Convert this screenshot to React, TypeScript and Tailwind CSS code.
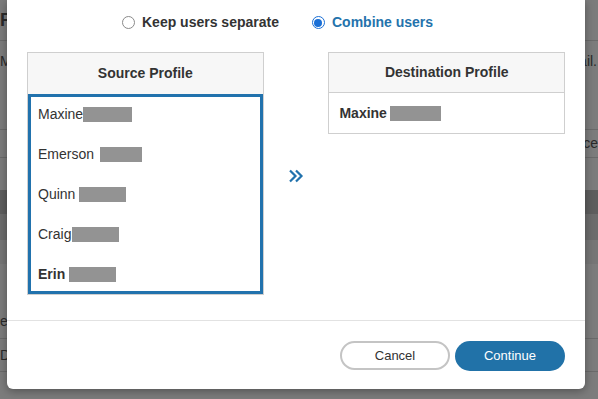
const sourceUsers = [
  { first: "Maxine", gap: 0, w: 49, bold: false },
  { first: "Emerson", gap: 6, w: 42, bold: false },
  { first: "Quinn", gap: 4, w: 47, bold: false },
  { first: "Craig", gap: 1, w: 47, bold: false },
  { first: "Erin", gap: 4, w: 47, bold: true },
];

function Redacted({ w }: { w: number }) {
  return <span className="inline-block h-[15px] bg-[#939393] align-middle" style={{ width: w }} />;
}

function Radio({ checked, label }: { checked: boolean; label: string }) {
  return (
    <label className="flex items-center gap-[7px]">
      {checked ? (
        <span className="flex h-[13px] w-[13px] items-center justify-center rounded-full border border-[#1a6fd6] bg-white">
          <span className="h-[8px] w-[8px] rounded-full bg-[#1a6fd6]" />
        </span>
      ) : (
        <span className="h-[13px] w-[13px] rounded-full border border-[#8a8a8a] bg-white" />
      )}
      <span className={`text-[14px] font-bold ${checked ? "text-[#2473ac]" : "text-[#333]"}`}>{label}</span>
    </label>
  );
}

function Background() {
  return (
    <div className="flex h-full w-full flex-col bg-[#7c7c7c] text-[14px] text-[#2a2a2a]">
      <div className="flex h-[41px] items-center border-b border-[#6a6a6a] px-0 font-bold text-[18px]">F</div>
      <div className="flex h-[40px] items-center justify-between pr-[1px]">
        <span>M</span>
        <span>ail.</span>
      </div>
      <div className="h-[48px]" />
      <div className="flex h-[29px] items-center justify-end border-y border-[#6a6a6a]">ce</div>
      <div className="h-[32px]" />
      <div className="h-[24px] bg-[#5e5e5e]" />
      <div className="h-[26px] bg-[#6c6c6c]" />
      <div className="h-[24px] bg-[#767676]" />
      <div className="h-[40px]" />
      <div className="flex h-[35px] items-center border-b border-[#6a6a6a]">er</div>
      <div className="flex h-[33px] items-center border-b border-[#6a6a6a]">De</div>
    </div>
  );
}

export default function App() {
  return (
    <div className="relative h-[399px] w-[598px] overflow-hidden font-['Liberation_Sans',Arial,sans-serif]">
      <Background />
      <div className="absolute left-[7px] top-0 flex h-[389px] w-[578px] flex-col rounded-b-[6px] bg-white shadow-[0_2px_10px_rgba(0,0,0,0.35)]">
        <div className="flex h-[44px] items-center gap-[33px] pl-[115px] pt-[1px]">
          <Radio checked={false} label="Keep users separate" />
          <Radio checked label="Combine users" />
        </div>

        <div className="flex h-[276px] items-start px-[20px] pt-[8px]">
          <div className="w-[237px] border border-[#cfcfcf]">
            <div className="flex h-[41px] items-center justify-center bg-[#f7f7f7] text-[14px] font-bold text-[#333]">
              Source Profile
            </div>
            <div className="flex h-[200px] flex-col gap-[6px] border-[3px] border-[#2172ad] px-[7px] text-[14px] text-[#333]">
              {sourceUsers.map((u) => (
                <div key={u.first} className="flex h-[34px] shrink-0 items-center">
                  <span className={u.bold ? "font-bold" : ""}>{u.first}</span>
                  <span style={{ width: u.gap }} />
                  <Redacted w={u.w} />
                </div>
              ))}
            </div>
          </div>

          <div className="flex h-[244px] w-[65px] items-center justify-center pt-[4px]">
            <svg width="16" height="16" viewBox="0 0 16 16" fill="none" stroke="#2172ad" strokeWidth="2.2">
              <path d="M2 2.5 L7.5 8 L2 13.5" />
              <path d="M8 2.5 L13.5 8 L8 13.5" />
            </svg>
          </div>

          <div className="w-[237px] border border-[#cfcfcf]">
            <div className="flex h-[40px] items-center justify-center border-b border-[#cfcfcf] bg-[#f7f7f7] text-[14px] font-bold text-[#333]">
              Destination Profile
            </div>
            <div className="flex h-[40px] items-center px-[10px] text-[14px] font-bold text-[#333]">
              <span>Maxine</span>
              <span className="w-[3px]" />
              <Redacted w={51} />
            </div>
          </div>
        </div>

        <div className="flex flex-1 items-center justify-end gap-[5px] border-t border-[#e2e2e2] pr-[20px] pt-[1px]">
          <button className="h-[29px] w-[110px] rounded-full border-2 border-[#c4c4c4] bg-white text-[13px] text-[#333]">
            Cancel
          </button>
          <button className="h-[30px] w-[110px] rounded-full bg-[#2172a8] text-[13px] text-white">Continue</button>
        </div>
      </div>
    </div>
  );
}
